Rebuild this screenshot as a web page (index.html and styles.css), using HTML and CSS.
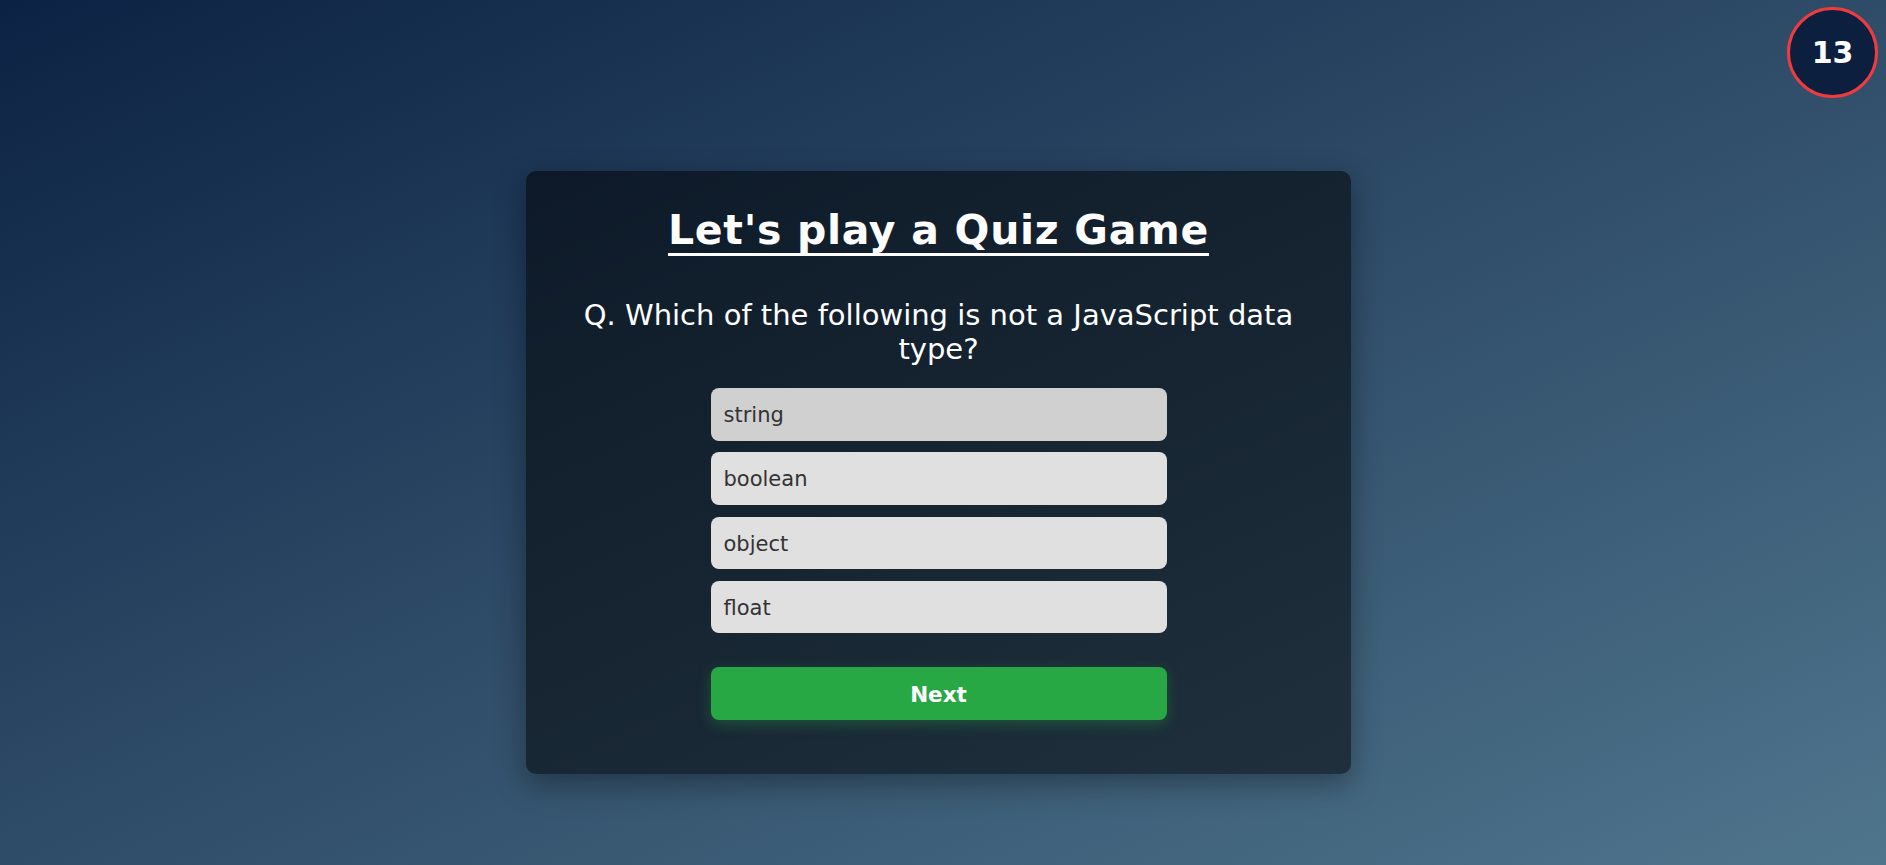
FILE: index.html
```html
<!DOCTYPE html>
<html lang="en">
<head>
<meta charset="utf-8">
<title>Quiz Game</title>
<link rel="stylesheet" href="styles.css">
</head>
<body>
<div class="timer">13</div>
<main class="page">
  <section class="card">
    <h1 class="title">Let's play a Quiz Game</h1>
    <p class="question">Q. Which of the following is not a JavaScript data type?</p>
    <ul class="options">
      <li class="option option-hover">string</li>
      <li class="option">boolean</li>
      <li class="option">object</li>
      <li class="option">float</li>
    </ul>
    <button class="next">Next</button>
  </section>
</main>
</body>
</html>
```
FILE: styles.css
```css
html, body {
  margin: 0;
  height: 100%;
}
body {
  background: linear-gradient(to bottom right, #0c2244 0%, #32506b 55%, #4f758d 100%);
  font-family: "DejaVu Sans", Verdana, sans-serif;
  color: #fff;
  overflow: hidden;
}
.timer {
  position: fixed;
  top: 7px;
  right: 8px;
  width: 85px;
  height: 85px;
  border: 3px solid #ef3b3f;
  border-radius: 50%;
  background: #0c1f3e;
  display: flex;
  align-items: center;
  justify-content: center;
  font-weight: bold;
  font-size: 30px;
  color: #fff;
}
.page {
  display: flex;
  justify-content: center;
  padding-top: 171px;
  padding-right: 9px;
}
.card {
  width: 825px;
  box-sizing: border-box;
  padding: 35px 40px 54px;
  background: rgba(0, 0, 0, 0.52);
  border-radius: 10px;
  box-shadow: 0 10px 30px rgba(0, 0, 0, 0.35);
  text-align: center;
  display: flex;
  flex-direction: column;
  align-items: center;
}
.title {
  margin: 0;
  font-size: 41px;
  line-height: 48px;
  font-weight: bold;
  letter-spacing: 0.7px;
  text-decoration: underline;
  text-decoration-thickness: 3px;
  text-underline-offset: 9px;
  text-decoration-skip-ink: none;
}
.question {
  margin: 44px 0 0;
  font-size: 29px;
  line-height: 34px;
}
.options {
  list-style: none;
  margin: 22px 0 0;
  padding: 0;
  width: 456px;
  display: flex;
  flex-direction: column;
  gap: 11.8px;
}
.option {
  box-sizing: border-box;
  height: 52.5px;
  padding: 15px 13px 12px;
  line-height: 25.5px;
  font-size: 21px;
  background: #e0e0e0;
  color: #333;
  border-radius: 8px;
  text-align: left;
}
.option-hover {
  background: #d0d0d0;
}
.next {
  margin-top: 34px;
  width: 456px;
  height: 53px;
  padding: 14px 0 12px;
  border: none;
  border-radius: 8px;
  background: #28a745;
  color: #fff;
  font-family: inherit;
  font-weight: bold;
  font-size: 21.5px;
  line-height: 27px;
  box-shadow: 0 4px 14px rgba(40, 167, 69, 0.35);
}
```
